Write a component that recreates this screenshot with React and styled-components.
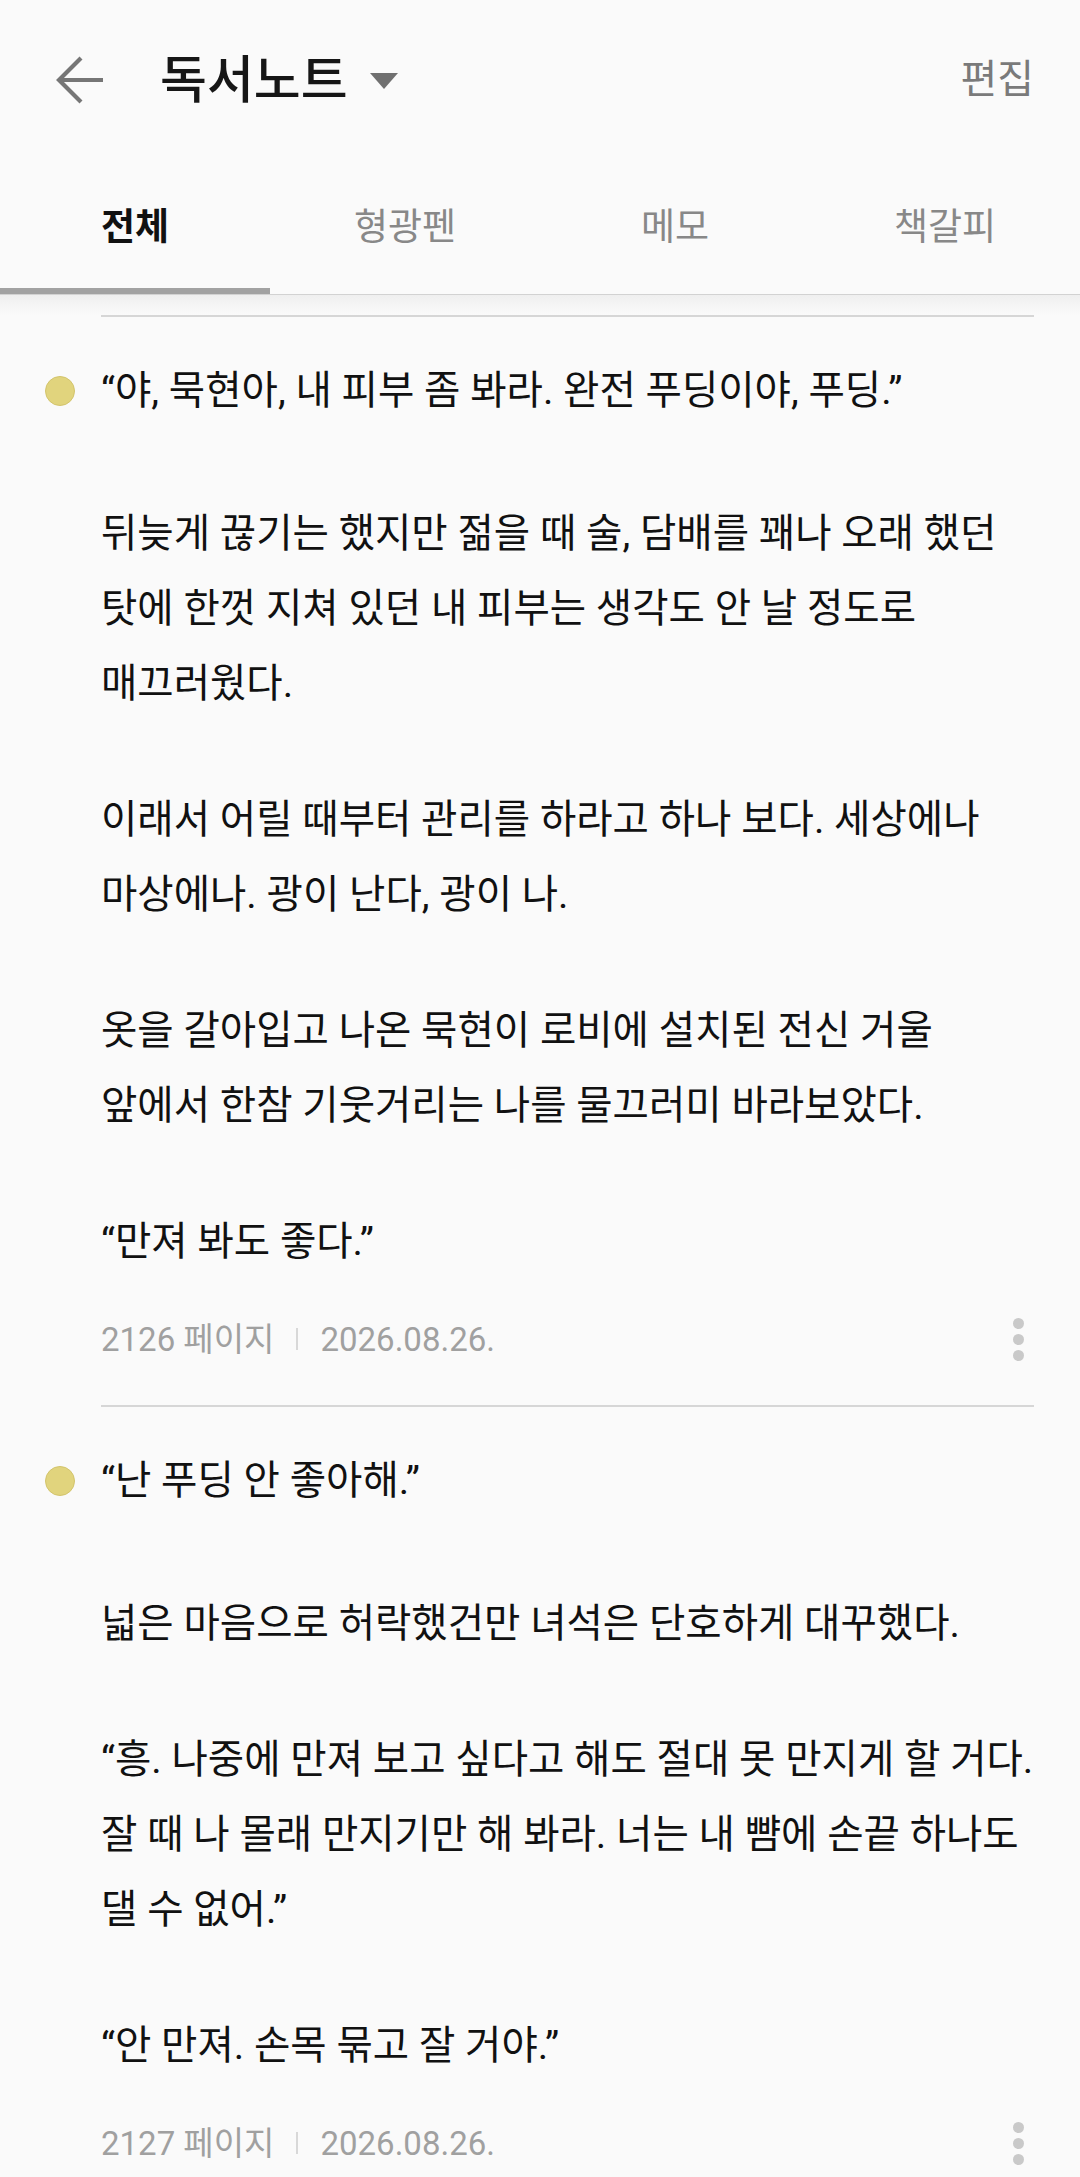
import React from "react";
import styled, { createGlobalStyle } from "styled-components";

const notes = [
  {
    lead: "“야, 묵현아, 내 피부 좀 봐라. 완전 푸딩이야, 푸딩.”",
    paragraphs: [
      [
        "뒤늦게 끊기는 했지만 젊을 때 술, 담배를 꽤나 오래 했던",
        "탓에 한껏 지쳐 있던 내 피부는 생각도 안 날 정도로",
        "매끄러웠다.",
      ],
      ["이래서 어릴 때부터 관리를 하라고 하나 보다. 세상에나", "마상에나. 광이 난다, 광이 나."],
      ["옷을 갈아입고 나온 묵현이 로비에 설치된 전신 거울", "앞에서 한참 기웃거리는 나를 물끄러미 바라보았다."],
      ["“만져 봐도 좋다.”"],
    ],
    page: "2126 페이지",
    date: "2026.08.26.",
  },
  {
    lead: "“난 푸딩 안 좋아해.”",
    paragraphs: [
      ["넓은 마음으로 허락했건만 녀석은 단호하게 대꾸했다."],
      [
        "“흥. 나중에 만져 보고 싶다고 해도 절대 못 만지게 할 거다.",
        "잘 때 나 몰래 만지기만 해 봐라. 너는 내 뺨에 손끝 하나도",
        "댈 수 없어.”",
      ],
      ["“안 만져. 손목 묶고 잘 거야.”"],
    ],
    page: "2127 페이지",
    date: "2026.08.26.",
  },
];

const tabs = ["전체", "형광펜", "메모", "책갈피"];

function App() {
  return (
    <Page>
      <GlobalStyle />
      <Header>
        <BackButton aria-label="back">
          <svg width="50" height="50" viewBox="0 0 50 50">
            <path
              d="M48 25 H5 M26 3 L4 25 L26 47"
              fill="none"
              stroke="#767676"
              strokeWidth="4.2"
              strokeLinejoin="miter"
            />
          </svg>
        </BackButton>
        <Title>독서노트</Title>
        <Caret width="28" height="16" viewBox="0 0 28 16">
          <path d="M0 0 H28 L14 16 Z" fill="#707070" />
        </Caret>
        <EditButton>편집</EditButton>
      </Header>

      <TabBar>
        {tabs.map((t, i) => (
          <Tab key={t} $active={i === 0}>
            {t}
          </Tab>
        ))}
      </TabBar>
      <Shade />

      {notes.map((note, i) => (
        <Entry key={i}>
          <Divider />
          <Body>
            <Marker>
              <Dot />
            </Marker>
            <Content>
              <Lead>{note.lead}</Lead>
              {note.paragraphs.map((lines, j) => (
                <Para key={j}>
                  {lines.map((l, k) => (
                    <Line key={k}>{l}</Line>
                  ))}
                </Para>
              ))}
              <Meta>
                <MetaText>{note.page}</MetaText>
                <MetaSep />
                <MetaText>{note.date}</MetaText>
                <Kebab>
                  <span />
                  <span />
                  <span />
                </Kebab>
              </Meta>
            </Content>
          </Body>
        </Entry>
      ))}
    </Page>
  );
}

const GlobalStyle = createGlobalStyle`
  html, body {
    margin: 0;
    padding: 0;
    background: #fafafa;
  }
  body {
    font-family: Roboto, "Noto Sans CJK KR", sans-serif;
    color: #111;
  }
`;

const Page = styled.div`
  width: 1080px;
  min-height: 2177px;
  background: #fafafa;
  overflow: hidden;
`;

const Header = styled.div`
  height: 160px;
  display: flex;
  align-items: center;
  padding: 0 46px 0 55px;
  box-sizing: border-box;
`;

const BackButton = styled.div`
  width: 50px;
  height: 50px;
  display: flex;
`;

const Title = styled.div`
  margin-left: 55px;
  font-size: 51px;
  font-weight: 500;
  line-height: 1;
  color: #161616;
`;

const Caret = styled.svg`
  margin-left: 22px;
  margin-top: 2px;
`;

const EditButton = styled.div`
  margin-left: auto;
  font-size: 40px;
  line-height: 1;
  color: #7a7a7a;
`;

const TabBar = styled.div`
  display: grid;
  grid-template-columns: repeat(4, 1fr);
  height: 135px;
  border-bottom: 1px solid #d2d2d2;
  box-sizing: border-box;
`;

const Tab = styled.div`
  display: flex;
  align-items: center;
  justify-content: center;
  box-sizing: border-box;
  border-bottom: 6px solid ${(p) => (p.$active ? "#a2a2a2" : "transparent")};
  font-size: 37px;
  font-weight: ${(p) => (p.$active ? 700 : 400)};
  color: ${(p) => (p.$active ? "#111" : "#888")};
`;

const Shade = styled.div`
  height: 20px;
  background: linear-gradient(#efefef, #fafafa);
`;

const Entry = styled.div``;

const Divider = styled.div`
  height: 2px;
  margin: 0 46px 0 101px;
  background: #d6d6d6;
`;

const Body = styled.div`
  display: grid;
  grid-template-columns: 101px 1fr;
  padding: 36px 46px 46px 0;
`;

const Marker = styled.div`
  height: 75px;
  display: flex;
  align-items: center;
`;

const Dot = styled.div`
  width: 30px;
  height: 30px;
  margin-left: 45px;
  border-radius: 50%;
  background: #e1d47d;
  box-sizing: border-box;
  border: 1.5px solid #d3c46c;
`;

const Content = styled.div`
  font-size: 39.5px;
  line-height: 75px;
`;

const Lead = styled.div`
  white-space: nowrap;
  margin-bottom: 68px;
`;

const Para = styled.div`
  & + & {
    margin-top: 61px;
  }
`;

const Line = styled.div`
  white-space: nowrap;
`;

const Meta = styled.div`
  margin-top: 40px;
  height: 40px;
  display: flex;
  align-items: center;
`;

const MetaText = styled.span`
  font-size: 33px;
  color: #a0a0a0;
`;

const MetaSep = styled.span`
  width: 2px;
  height: 22px;
  margin: 0 22px;
  background: #d8d8d8;
`;

const Kebab = styled.div`
  margin-left: auto;
  margin-right: 10px;
  display: flex;
  flex-direction: column;
  gap: 5px;

  span {
    width: 11px;
    height: 11px;
    border-radius: 50%;
    background: #c9c9c9;
  }
`;

export default App;
